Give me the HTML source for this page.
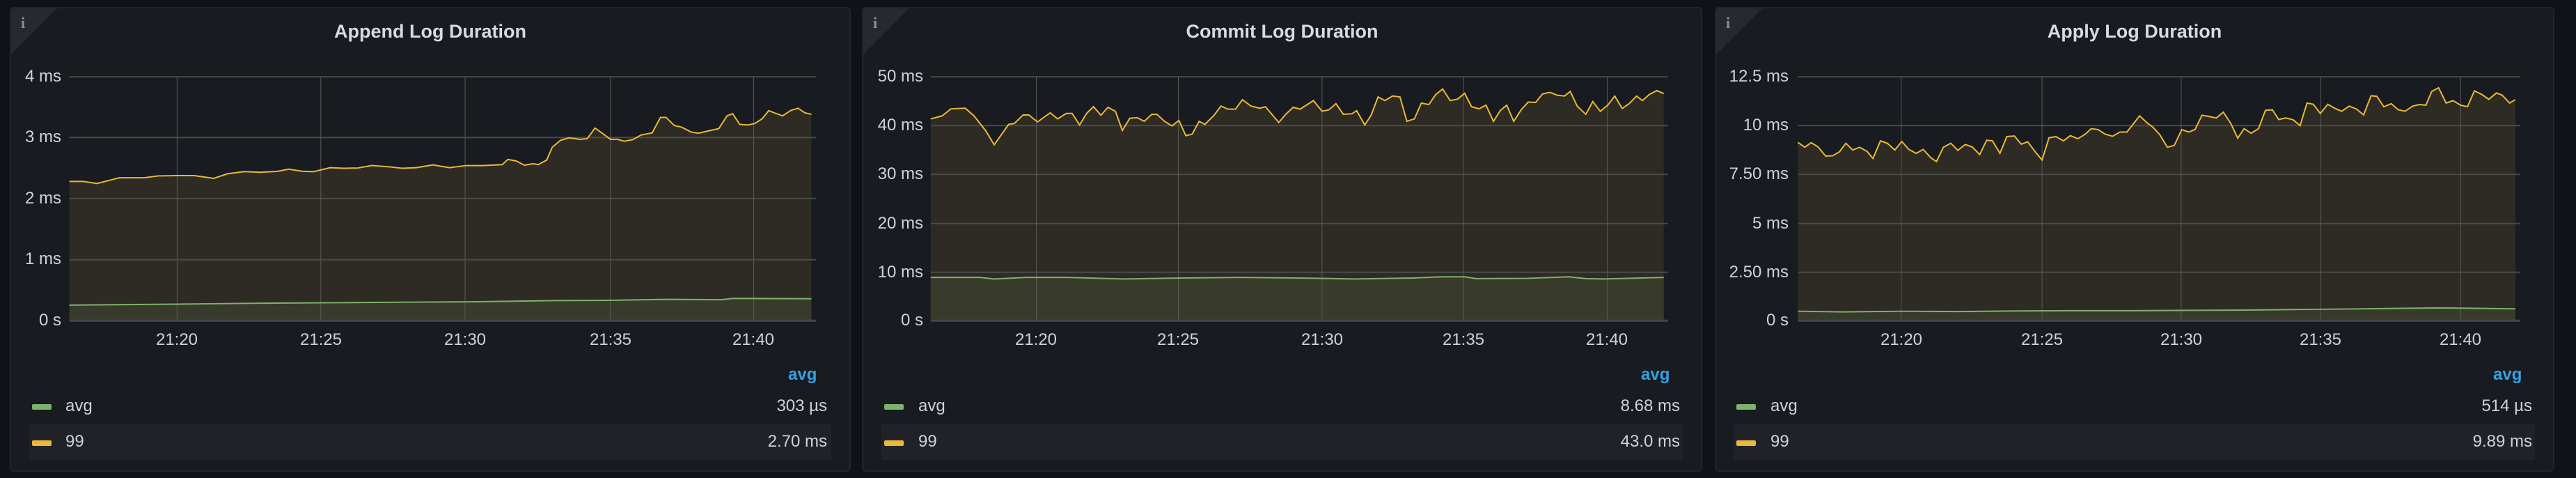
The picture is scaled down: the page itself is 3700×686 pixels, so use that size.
<!DOCTYPE html>
<html><head><meta charset="utf-8"><style>
*{margin:0;padding:0;box-sizing:border-box}
body{width:3700px;height:686px;background:#111217;position:relative;overflow:hidden;font-family:"Liberation Sans",sans-serif;color:#ccccdc}
.panel{position:absolute;top:10px;height:667px;background:#181b1f;border:2px solid #22252b;border-radius:6px;overflow:hidden}
.corner{position:absolute;left:0;top:0;width:0;height:0;border-top:66px solid #262930;border-right:66px solid transparent}
.ii{position:absolute;left:14px;top:8px;font-family:"Liberation Serif",serif;font-weight:bold;font-size:22px;color:#8e8e95}
.title{position:absolute;top:18px;font-size:27px;font-weight:bold;color:#d8d9e3;text-align:center;width:100%}
svg{position:absolute;top:0}
.t{position:absolute;font-size:24px;color:#d0d1dc;white-space:nowrap;line-height:28px}
.yl{text-align:right;width:200px}
.xl{width:100px;text-align:center}
.hdr{position:absolute;font-size:24px;font-weight:bold;color:#33a2e5;line-height:28px}
.row{position:absolute;height:52px;background:#202228}
.sw{position:absolute;width:28px;height:8px;border-radius:2px}
</style></head><body>

<div class="panel" style="left:14px;width:1208px"><div class="corner"></div><div class="ii">i</div><div class="title">Append Log Duration</div></div>
<div class="panel" style="left:1238px;width:1207px"><div class="corner"></div><div class="ii">i</div><div class="title">Commit Log Duration</div></div>
<div class="panel" style="left:2463px;width:1206px"><div class="corner"></div><div class="ii">i</div><div class="title">Apply Log Duration</div></div>

<!-- Panel 1 -->
<svg style="left:0" width="1250" height="686" viewBox="0 0 1568 1568" preserveAspectRatio="none">
<polygon fill="#2e2b24" points="125,1052 125,595 150,595 175,602 215,583 260,583 285,577 320,576 350,576 385,585 410,570 440,563 470,565 500,562 520,555 545,562 565,563 595,550 620,552 645,551 670,543 700,547 725,552 750,550 780,541 810,550 840,543 870,543 905,540 915,523 930,528 945,542 960,537 970,540 985,525 995,483 1010,460 1025,452 1045,457 1058,455 1072,420 1085,437 1100,457 1112,457 1125,463 1140,458 1155,443 1175,436 1190,385 1200,385 1215,412 1228,417 1245,433 1258,437 1275,430 1295,422 1310,380 1320,373 1333,408 1348,410 1360,405 1373,390 1385,363 1398,372 1410,380 1425,362 1438,355 1450,370 1462,375 1462,1052"/>
<polygon fill="#383a2c" points="125,1052 125,1001 300,998 450,995 600,993 750,991 850,990 1000,986 1100,985 1200,982 1300,983 1320,979 1462,980 1462,1052"/>
<path vector-effect="non-scaling-stroke" stroke="#4a4a48" stroke-width="2" d="M125 252H1470M125 451H1470M125 651H1470M125 852H1470"/>
<path vector-effect="non-scaling-stroke" stroke="#5a5a58" stroke-width="1" d="M319 252V1052M578 252V1052M838 252V1052M1100 252V1052M1358 252V1052"/>
<path vector-effect="non-scaling-stroke" stroke="#46474b" stroke-width="3" d="M125 1052H1470"/>
<polyline vector-effect="non-scaling-stroke" fill="none" stroke="#eab839" stroke-width="2" points="125,595 150,595 175,602 215,583 260,583 285,577 320,576 350,576 385,585 410,570 440,563 470,565 500,562 520,555 545,562 565,563 595,550 620,552 645,551 670,543 700,547 725,552 750,550 780,541 810,550 840,543 870,543 905,540 915,523 930,528 945,542 960,537 970,540 985,525 995,483 1010,460 1025,452 1045,457 1058,455 1072,420 1085,437 1100,457 1112,457 1125,463 1140,458 1155,443 1175,436 1190,385 1200,385 1215,412 1228,417 1245,433 1258,437 1275,430 1295,422 1310,380 1320,373 1333,408 1348,410 1360,405 1373,390 1385,363 1398,372 1410,380 1425,362 1438,355 1450,370 1462,375"/>
<polyline vector-effect="non-scaling-stroke" fill="none" stroke="#7eb26d" stroke-width="2" points="125,1001 300,998 450,995 600,993 750,991 850,990 1000,986 1100,985 1200,982 1300,983 1320,979 1462,980"/>
</svg>

<!-- Panel 2 -->
<svg style="left:1200px" width="1300" height="686" viewBox="0 0 1568 1568" preserveAspectRatio="none">
<polygon fill="#2e2b24" points="165,1052 165,390 185,380 200,357 225,355 240,380 260,428 275,475 300,408 310,405 325,377 335,377 350,400 372,370 385,390 400,372 410,372 423,410 435,372 447,350 460,378 472,352 485,365 497,428 510,388 523,386 535,398 548,375 557,375 570,398 583,413 595,395 607,445 618,440 630,398 640,408 655,380 668,348 680,358 693,358 705,327 720,348 735,355 745,350 768,402 780,375 793,352 805,358 828,330 843,365 855,360 867,340 880,375 895,373 903,363 917,410 928,378 940,318 952,330 965,315 978,318 990,398 1003,390 1015,338 1028,343 1040,310 1052,292 1065,330 1078,325 1090,306 1102,350 1115,357 1127,345 1140,398 1152,362 1163,345 1175,398 1188,360 1200,335 1213,336 1225,308 1238,303 1250,312 1263,315 1273,300 1285,348 1300,375 1312,333 1325,365 1338,345 1350,315 1363,356 1375,340 1388,315 1398,330 1410,310 1423,297 1435,307 1435,1052"/>
<polygon fill="#383a2c" points="165,1052 165,910 250,910 275,915 330,910 400,910 500,915 600,912 700,910 800,912 900,915 1000,912 1050,908 1090,908 1110,914 1200,913 1270,908 1300,914 1330,915 1435,910 1435,1052"/>
<path vector-effect="non-scaling-stroke" stroke="#4a4a48" stroke-width="2" d="M165 252H1442M165 412H1442M165 572H1442M165 733H1442M165 893H1442"/>
<path vector-effect="non-scaling-stroke" stroke="#5a5a58" stroke-width="1" d="M348 252V1052M594 252V1052M843 252V1052M1088 252V1052M1337 252V1052"/>
<path vector-effect="non-scaling-stroke" stroke="#46474b" stroke-width="3" d="M165 1052H1442"/>
<polyline vector-effect="non-scaling-stroke" fill="none" stroke="#eab839" stroke-width="2" points="165,390 185,380 200,357 225,355 240,380 260,428 275,475 300,408 310,405 325,377 335,377 350,400 372,370 385,390 400,372 410,372 423,410 435,372 447,350 460,378 472,352 485,365 497,428 510,388 523,386 535,398 548,375 557,375 570,398 583,413 595,395 607,445 618,440 630,398 640,408 655,380 668,348 680,358 693,358 705,327 720,348 735,355 745,350 768,402 780,375 793,352 805,358 828,330 843,365 855,360 867,340 880,375 895,373 903,363 917,410 928,378 940,318 952,330 965,315 978,318 990,398 1003,390 1015,338 1028,343 1040,310 1052,292 1065,330 1078,325 1090,306 1102,350 1115,357 1127,345 1140,398 1152,362 1163,345 1175,398 1188,360 1200,335 1213,336 1225,308 1238,303 1250,312 1263,315 1273,300 1285,348 1300,375 1312,333 1325,365 1338,345 1350,315 1363,356 1375,340 1388,315 1398,330 1410,310 1423,297 1435,307"/>
<polyline vector-effect="non-scaling-stroke" fill="none" stroke="#7eb26d" stroke-width="2" points="165,910 250,910 275,915 330,910 400,910 500,915 600,912 700,910 800,912 900,915 1000,912 1050,908 1090,908 1110,914 1200,913 1270,908 1300,914 1330,915 1435,910"/>
</svg>

<!-- Panel 3 -->
<svg style="left:2400px" width="1300" height="686" viewBox="0 0 1568 1568" preserveAspectRatio="none">
<polygon fill="#2e2b24" points="220,1052 220,467 232,483 243,468 255,482 268,512 280,511 292,498 303,470 315,492 327,483 340,497 350,520 363,462 375,470 388,492 400,464 412,490 425,503 437,490 450,517 460,530 472,483 485,470 497,493 510,474 522,482 535,507 547,460 557,462 570,503 582,448 595,446 607,473 618,465 632,500 643,525 655,452 667,448 680,462 692,445 705,455 718,440 728,422 740,425 752,440 765,447 778,433 790,433 812,380 825,403 835,417 847,442 860,483 872,477 885,425 897,433 908,425 920,378 932,382 945,387 957,368 970,405 982,453 993,422 1005,437 1018,422 1030,362 1042,360 1053,392 1065,387 1078,393 1090,412 1102,338 1113,342 1125,372 1138,342 1150,355 1162,365 1175,348 1188,358 1200,377 1213,314 1223,316 1235,350 1248,340 1260,360 1272,365 1285,348 1297,343 1308,345 1318,300 1330,288 1343,338 1355,330 1368,345 1380,350 1392,298 1405,310 1417,326 1430,305 1440,312 1453,338 1463,327 1463,1052"/>
<polygon fill="#383a2c" points="220,1052 220,1021 300,1023 400,1021 500,1022 600,1020 700,1019 800,1019 900,1018 1000,1017 1100,1015 1200,1013 1330,1010 1463,1013 1463,1052"/>
<path vector-effect="non-scaling-stroke" stroke="#4a4a48" stroke-width="2" d="M220 252H1471M220 412H1471M220 572H1471M220 733H1471M220 893H1471"/>
<path vector-effect="non-scaling-stroke" stroke="#5a5a58" stroke-width="1" d="M399 252V1052M643 252V1052M884 252V1052M1126 252V1052M1368 252V1052"/>
<path vector-effect="non-scaling-stroke" stroke="#46474b" stroke-width="3" d="M220 1052H1471"/>
<polyline vector-effect="non-scaling-stroke" fill="none" stroke="#eab839" stroke-width="2" points="220,467 232,483 243,468 255,482 268,512 280,511 292,498 303,470 315,492 327,483 340,497 350,520 363,462 375,470 388,492 400,464 412,490 425,503 437,490 450,517 460,530 472,483 485,470 497,493 510,474 522,482 535,507 547,460 557,462 570,503 582,448 595,446 607,473 618,465 632,500 643,525 655,452 667,448 680,462 692,445 705,455 718,440 728,422 740,425 752,440 765,447 778,433 790,433 812,380 825,403 835,417 847,442 860,483 872,477 885,425 897,433 908,425 920,378 932,382 945,387 957,368 970,405 982,453 993,422 1005,437 1018,422 1030,362 1042,360 1053,392 1065,387 1078,393 1090,412 1102,338 1113,342 1125,372 1138,342 1150,355 1162,365 1175,348 1188,358 1200,377 1213,314 1223,316 1235,350 1248,340 1260,360 1272,365 1285,348 1297,343 1308,345 1318,300 1330,288 1343,338 1355,330 1368,345 1380,350 1392,298 1405,310 1417,326 1430,305 1440,312 1453,338 1463,327"/>
<polyline vector-effect="non-scaling-stroke" fill="none" stroke="#7eb26d" stroke-width="2" points="220,1021 300,1023 400,1021 500,1022 600,1020 700,1019 800,1019 900,1018 1000,1017 1100,1015 1200,1013 1330,1010 1463,1013"/>
</svg>

<!-- Y labels -->
<div class="t yl" style="left:-112px;top:96px">4 ms</div>
<div class="t yl" style="left:-112px;top:183px">3 ms</div>
<div class="t yl" style="left:-112px;top:271px">2 ms</div>
<div class="t yl" style="left:-112px;top:358px">1 ms</div>
<div class="t yl" style="left:-112px;top:446px">0 s</div>

<div class="t yl" style="left:1126px;top:96px">50 ms</div>
<div class="t yl" style="left:1126px;top:166px">40 ms</div>
<div class="t yl" style="left:1126px;top:236px">30 ms</div>
<div class="t yl" style="left:1126px;top:307px">20 ms</div>
<div class="t yl" style="left:1126px;top:377px">10 ms</div>
<div class="t yl" style="left:1126px;top:446px">0 s</div>

<div class="t yl" style="left:2369px;top:96px">12.5 ms</div>
<div class="t yl" style="left:2369px;top:166px">10 ms</div>
<div class="t yl" style="left:2369px;top:236px">7.50 ms</div>
<div class="t yl" style="left:2369px;top:307px">5 ms</div>
<div class="t yl" style="left:2369px;top:377px">2.50 ms</div>
<div class="t yl" style="left:2369px;top:446px">0 s</div>

<!-- X labels -->
<div class="t xl" style="left:204px;top:474px">21:20</div>
<div class="t xl" style="left:411px;top:474px">21:25</div>
<div class="t xl" style="left:618px;top:474px">21:30</div>
<div class="t xl" style="left:827px;top:474px">21:35</div>
<div class="t xl" style="left:1032px;top:474px">21:40</div>

<div class="t xl" style="left:1438px;top:474px">21:20</div>
<div class="t xl" style="left:1642px;top:474px">21:25</div>
<div class="t xl" style="left:1849px;top:474px">21:30</div>
<div class="t xl" style="left:2052px;top:474px">21:35</div>
<div class="t xl" style="left:2258px;top:474px">21:40</div>

<div class="t xl" style="left:2681px;top:474px">21:20</div>
<div class="t xl" style="left:2883px;top:474px">21:25</div>
<div class="t xl" style="left:3083px;top:474px">21:30</div>
<div class="t xl" style="left:3283px;top:474px">21:35</div>
<div class="t xl" style="left:3484px;top:474px">21:40</div>

<!-- Legends -->
<div class="hdr" style="left:1132px;top:524px">avg</div>
<div class="sw" style="left:46px;top:580px;background:#7eb26d"></div>
<div class="t" style="left:94px;top:569px">avg</div>
<div class="t yl" style="left:988px;top:569px">303 µs</div>
<div class="row" style="left:42px;top:608px;width:1152px"></div>
<div class="sw" style="left:46px;top:632px;background:#eab839"></div>
<div class="t" style="left:94px;top:620px">99</div>
<div class="t yl" style="left:988px;top:620px">2.70 ms</div>

<div class="hdr" style="left:2357px;top:524px">avg</div>
<div class="sw" style="left:1270px;top:580px;background:#7eb26d"></div>
<div class="t" style="left:1319px;top:569px">avg</div>
<div class="t yl" style="left:2213px;top:569px">8.68 ms</div>
<div class="row" style="left:1266px;top:608px;width:1151px"></div>
<div class="sw" style="left:1270px;top:632px;background:#eab839"></div>
<div class="t" style="left:1319px;top:620px">99</div>
<div class="t yl" style="left:2213px;top:620px">43.0 ms</div>

<div class="hdr" style="left:3581px;top:524px">avg</div>
<div class="sw" style="left:2494px;top:580px;background:#7eb26d"></div>
<div class="t" style="left:2543px;top:569px">avg</div>
<div class="t yl" style="left:3437px;top:569px">514 µs</div>
<div class="row" style="left:2490px;top:608px;width:1151px"></div>
<div class="sw" style="left:2494px;top:632px;background:#eab839"></div>
<div class="t" style="left:2543px;top:620px">99</div>
<div class="t yl" style="left:3437px;top:620px">9.89 ms</div>
</body></html>
